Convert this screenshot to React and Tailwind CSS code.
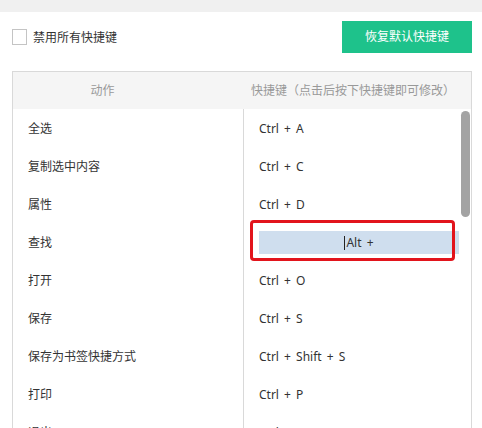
export default function App() {
  const rows = [
    ["全选", "Ctrl + A"],
    ["复制选中内容", "Ctrl + C"],
    ["属性", "Ctrl + D"],
    ["查找", null],
    ["打开", "Ctrl + O"],
    ["保存", "Ctrl + S"],
    ["保存为书签快捷方式", "Ctrl + Shift + S"],
    ["打印", "Ctrl + P"],
    ["退出", "Ctrl + Q"],
  ];
  return (
    <div className="h-[428px] w-[482px] overflow-hidden bg-white font-['Noto_Sans','Noto_Sans_CJK_SC',sans-serif] text-[12px] text-[#333]">
      <div className="h-[12px] bg-[#f0f0f0]" />
      <div className="flex items-center justify-between pl-[12px] pr-[10px] pt-[9px]">
        <label className="flex items-center gap-[6px]">
          <span className="block h-[16px] w-[15px] border border-[#c4c4c4] bg-white" />
          <span className="pt-[1px] leading-none">禁用所有快捷键</span>
        </label>
        <button className="flex h-[32px] w-[130px] items-center justify-center bg-[#1ec28b] text-[12px] text-white">
          恢复默认快捷键
        </button>
      </div>
      <div className="relative ml-[12px] mt-[18px] h-[400px] w-[460px] border border-[#d9d9d9]">
        <div className="grid h-[37px] grid-cols-[230px_1fr] items-center bg-[#f5f5f5] pt-[1px] text-[#999]">
          <div className="pr-[51px] text-center">动作</div>
          <div className="pr-[8px] text-center">快捷键（点击后按下快捷键即可修改）</div>
        </div>
        <div className="grid grid-cols-[230px_1fr]">
          {rows.map(([a, k], i) => (
            <div key={i} className="contents">
              <div className="flex h-[38px] items-center pl-[15px] pt-[2px]">{a}</div>
              <div className="flex h-[38px] items-center border-l border-[#d9d9d9] pl-[15px] pt-[2px] [word-spacing:2px]">
                {k ? (
                  k
                ) : (
                  <div className="-mt-[1px] flex h-[23px] w-[200px] items-center justify-center bg-[#cfdeee]">
                    <span className="mr-[1px] inline-block h-[14px] w-px bg-[#222]" />
                    Alt +
                  </div>
                )}
              </div>
            </div>
          ))}
        </div>
        <div className="absolute left-[448px] top-[39px] h-[106px] w-[9px] rounded-full bg-[#a3a3a3]" />
        <div className="absolute left-[237px] top-[148px] h-[41px] w-[205px] rounded-[4px] border-[3px] border-[#e2141c]" />
      </div>
    </div>
  );
}
